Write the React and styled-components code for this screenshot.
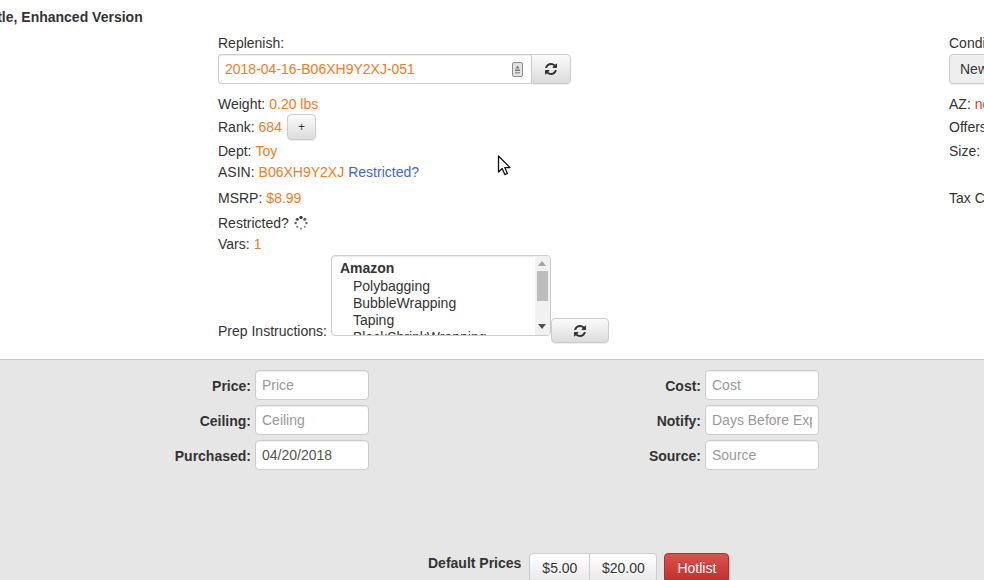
import React from "react"
import styled, { createGlobalStyle } from "styled-components"

const GlobalStyle = createGlobalStyle`
  html, body {
    margin: 0;
    padding: 0;
    background: #fff;
  }
  body {
    font-family: "Liberation Sans", Arial, sans-serif;
    font-size: 14px;
    line-height: 20px;
    color: #333;
  }
`;

const Page = styled.div`
  position: relative;
  width: 984px;
  height: 580px;
  overflow: hidden;
`;

const TopPanel = styled.div`
  height: 359px;
  box-sizing: border-box;
  padding-top: 7px;
`;

const Title = styled.div`
  font-weight: bold;
  line-height: 20px;
  white-space: nowrap;
  margin-left: -15px;
`;

const Columns = styled.div`
  display: flex;
  margin: 6px 0 0 218px;
`;

const LeftColumn = styled.div`
  width: 731px;
  flex: none;
`;

const RightColumn = styled.div`
  flex: none;
  width: 200px;
`;

const Row = styled.div`
  display: flex;
  align-items: center;
  height: ${(p) => p.$h || 20}px;
  margin-top: ${(p) => p.$mt || 0}px;
  white-space: nowrap;
`;

const Value = styled.span`
  color: #f47b20;
  margin-left: 4px;
`;

const Alert = styled.span`
  color: #d9402f;
  margin-left: 4px;
`;

const LinkText = styled.a`
  color: #3f67c8;
  margin-left: 4px;
`;

const InputGroup = styled.div`
  display: flex;
  width: 353px;
  height: 30px;
  margin-top: 1px;
`;

const ReplenishField = styled.div`
  flex: 1;
  display: flex;
  align-items: center;
  justify-content: space-between;
  box-sizing: border-box;
  padding: 0 8px 0 6px;
  background: #fff;
  border: 1px solid #ccc;
  border-right: 0;
  border-radius: 4px 0 0 4px;
  box-shadow: inset 0 1px 1px rgba(0, 0, 0, 0.075);
  color: #f47b20;
`;

const Button = styled.button`
  display: flex;
  align-items: center;
  justify-content: center;
  box-sizing: border-box;
  flex: none;
  width: ${(p) => p.$w}px;
  height: ${(p) => p.$h}px;
  margin-left: ${(p) => p.$ml || 0}px;
  margin-bottom: ${(p) => p.$mb || 0}px;
  padding: 0;
  font-family: inherit;
  font-size: ${(p) => p.$fs || 14}px;
  color: #333;
  background: linear-gradient(to bottom, #fbfbfb 0%, #dcdcdc 100%);
  border: 1px solid #ccc;
  border-radius: ${(p) => p.$radius || "4px"};
  text-shadow: 0 1px 0 #fff;
  box-shadow: inset 0 1px 0 rgba(255, 255, 255, 0.15), 0 1px 1px rgba(0, 0, 0, 0.075);
`;

const ConditionButton = styled(Button)`
  justify-content: flex-start;
  padding-left: 10px;
  margin-top: 1px;
  background: #eee;
`;

const PriceButton = styled(Button)`
  background: linear-gradient(to bottom, #fff 0%, #e8e8e8 100%);
`;

const PrepRow = styled.div`
  display: flex;
  align-items: flex-end;
  margin-top: 1px;
  white-space: nowrap;
`;

const PrepLabel = styled.span`
  margin-right: 4px;
  line-height: 20px;
  margin-bottom: -5px;
`;

const ListBox = styled.div`
  display: flex;
  box-sizing: border-box;
  width: 220px;
  height: 81px;
  background: #fff;
  border: 1px solid #ccc;
  border-radius: 4px;
  overflow: hidden;
  box-shadow: inset 0 1px 1px rgba(0, 0, 0, 0.075);
`;

const ListItems = styled.div`
  flex: 1;
  padding: 4px 0 0 8px;
  overflow: hidden;
`;

const GroupName = styled.div`
  font-weight: bold;
  line-height: 17px;
  margin-bottom: 1px;
`;

const Item = styled.div`
  line-height: 17px;
  padding-left: 13px;
`;

const ScrollTrack = styled.div`
  position: relative;
  flex: none;
  width: 15px;
  background: #f1f1f1;
`;

const ArrowUp = styled.div`
  position: absolute;
  top: 5px;
  left: 3px;
  border-left: 4px solid transparent;
  border-right: 4px solid transparent;
  border-bottom: 5px solid #a3a3a3;
`;

const ArrowDown = styled.div`
  position: absolute;
  bottom: 6px;
  left: 3px;
  border-left: 4px solid transparent;
  border-right: 4px solid transparent;
  border-top: 5px solid #505050;
`;

const Thumb = styled.div`
  position: absolute;
  top: 15px;
  left: 2px;
  width: 11px;
  height: 30px;
  background: #bdbdbd;
`;

const BottomPanel = styled.div`
  height: 221px;
  box-sizing: border-box;
  background: #e6e6e6;
  border-top: 1px solid #c8c8c8;
  padding-top: 10px;
`;

const FormGrid = styled.div`
  display: grid;
  grid-template-columns: 450px 450px;
`;

const FieldColumn = styled.div`
  display: flex;
  flex-direction: column;
  gap: 5px;
`;

const Field = styled.div`
  display: flex;
  align-items: center;
  justify-content: flex-end;
  gap: 4px;
  width: 369px;
`;

const FieldLabel = styled.label`
  font-weight: bold;
  margin-top: 2px;
`;

const TextInput = styled.input`
  box-sizing: border-box;
  width: 114px;
  height: 30px;
  padding: 0 6px;
  font-family: inherit;
  font-size: 14px;
  color: #555;
  background: #fff;
  border: 1px solid #ccc;
  border-radius: 4px;
  box-shadow: inset 0 1px 1px rgba(0, 0, 0, 0.075);
  &::placeholder {
    color: #999;
    opacity: 1;
  }
`;

const PriceBar = styled.div`
  display: flex;
  align-items: flex-start;
  margin: 83px 0 0 428px;
`;

const PriceLabel = styled.span`
  font-weight: bold;
  margin-right: 8px;
`;

const HotlistButton = styled.button`
  flex: none;
  box-sizing: border-box;
  width: 65px;
  height: 30px;
  margin-left: 7px;
  padding: 0;
  font-family: inherit;
  font-size: 14px;
  color: #fff;
  background: linear-gradient(to bottom, #d9534f 0%, #c12e2a 100%);
  border: 1px solid #b92c28;
  border-radius: 4px;
  text-shadow: 0 -1px 0 rgba(0, 0, 0, 0.2);
`;

const CursorMark = styled.svg`
  position: absolute;
  left: 497px;
  top: 155px;
`;

const SpinnerMark = styled.svg`
  margin-left: 5px;
`;

const spinnerDots = [
  [7, 1.6, 1.7, 0.95],
  [10.8, 3.2, 1.5, 0.8],
  [12.4, 7, 1.2, 0.7],
  [10.8, 10.8, 1, 0.6],
  [7, 12.4, 1, 0.6],
  [3.2, 10.8, 1.1, 0.65],
  [1.6, 7, 1.3, 0.75],
  [3.2, 3.2, 1.5, 0.85],
];

const Spinner = () => (
  <SpinnerMark width="14" height="14" viewBox="0 0 14 14">
    {spinnerDots.map(([x, y, r, o]) => (
      <circle key={x + "-" + y} cx={x} cy={y} r={r} fill="#333" opacity={o} />
    ))}
  </SpinnerMark>
);

const RefreshIcon = () => (
  <svg width="14" height="14" viewBox="0 0 1792 1792" fill="#333">
    <path d="M1639 1056q0 5-1 7-64 268-268 434.500t-478 166.500q-146 0-282.500-55t-243.500-157l-129 129q-19 19-45 19t-45-19-19-45v-448q0-26 19-45t45-19h448q26 0 45 19t19 45-19 45l-137 137q71 66 161 102t187 36q134 0 250-65t186-179q11-17 53-117 8-23 30-23h192q13 0 22.500 9.500t9.500 22.500zm25-800v448q0 26-19 45t-45 19h-448q-26 0-45-19t-19-45 19-45l138-138q-148-137-349-137-134 0-250 65t-186 179q-11 17-53 117-8 23-30 23h-199q-13 0-22.500-9.500t-9.500-22.500v-7q65-268 270-434.500t480-166.500q146 0 284 55.500t245 156.500l130-129q19-19 45-19t45 19 19 45z" />
  </svg>
);

const FieldIcon = () => (
  <svg width="11" height="15" viewBox="0 0 11 15">
    <rect x="0.5" y="0.5" width="10" height="14" rx="1.5" fill="#e2e2e2" stroke="#8c8c8c" />
    <path d="M5.5 3.5 L7.5 6.5 H3.5 Z" fill="#777" />
    <rect x="3" y="7.5" width="5" height="1.5" fill="#777" />
    <rect x="3" y="10" width="5" height="1.5" fill="#999" />
  </svg>
);

const Cursor = () => (
  <CursorMark width="15" height="22" viewBox="0 0 15 22">
    <path
      d="M1.5 1 V17 L5.2 13.6 L7.8 19.6 L10.4 18.4 L7.8 12.6 H13 Z"
      fill="#fff"
      stroke="#111"
      strokeWidth="1.3"
      strokeLinejoin="round"
    />
  </CursorMark>
);

export default function App() {
  return (
    <Page>
      <GlobalStyle />
      <TopPanel>
        <Title>Title, Enhanced Version</Title>
        <Columns>
          <LeftColumn>
            <Row>Replenish:</Row>
            <InputGroup>
              <ReplenishField>
                2018-04-16-B06XH9Y2XJ-051
                <FieldIcon />
              </ReplenishField>
              <Button $w={40} $h={30} $radius="0 4px 4px 0">
                <RefreshIcon />
              </Button>
            </InputGroup>
            <Row $mt={10}>Weight:<Value>0.20 lbs</Value></Row>
            <Row $h={26}>
              Rank:<Value>684</Value>
              <Button $w={29} $h={26} $fs={12} $ml={5}>+</Button>
            </Row>
            <Row $mt={1}>Dept:<Value>Toy</Value></Row>
            <Row $mt={1}>
              ASIN:<Value>B06XH9Y2XJ</Value><LinkText>Restricted?</LinkText>
            </Row>
            <Row $mt={6}>MSRP:<Value>$8.99</Value></Row>
            <Row $mt={5}>Restricted?<Spinner /></Row>
            <Row $mt={1}>Vars:<Value>1</Value></Row>
            <PrepRow>
              <PrepLabel>Prep Instructions:</PrepLabel>
              <ListBox>
                <ListItems>
                  <GroupName>Amazon</GroupName>
                  <Item>Polybagging</Item>
                  <Item>BubbleWrapping</Item>
                  <Item>Taping</Item>
                  <Item>BlackShrinkWrapping</Item>
                </ListItems>
                <ScrollTrack>
                  <ArrowUp />
                  <Thumb />
                  <ArrowDown />
                </ScrollTrack>
              </ListBox>
              <Button $w={58} $h={25} $mb={-7}>
                <RefreshIcon />
              </Button>
            </PrepRow>
          </LeftColumn>
          <RightColumn>
            <Row>Condition:</Row>
            <ConditionButton $w={80} $h={30}>New</ConditionButton>
            <Row $mt={10}>AZ:<Alert>no</Alert></Row>
            <Row $mt={3}>Offers:</Row>
            <Row $mt={4}>Size:</Row>
            <Row $mt={27}>Tax Code:</Row>
          </RightColumn>
        </Columns>
      </TopPanel>
      <BottomPanel>
        <FormGrid>
          <FieldColumn>
            <Field><FieldLabel>Price:</FieldLabel><TextInput placeholder="Price" /></Field>
            <Field><FieldLabel>Ceiling:</FieldLabel><TextInput placeholder="Ceiling" /></Field>
            <Field><FieldLabel>Purchased:</FieldLabel><TextInput defaultValue="04/20/2018" /></Field>
          </FieldColumn>
          <FieldColumn>
            <Field><FieldLabel>Cost:</FieldLabel><TextInput placeholder="Cost" /></Field>
            <Field><FieldLabel>Notify:</FieldLabel><TextInput placeholder="Days Before Expiry" /></Field>
            <Field><FieldLabel>Source:</FieldLabel><TextInput placeholder="Source" /></Field>
          </FieldColumn>
        </FormGrid>
        <PriceBar>
          <PriceLabel>Default Prices</PriceLabel>
          <PriceButton $w={61} $h={30} $radius="4px 0 0 4px">$5.00</PriceButton>
          <PriceButton $w={68} $h={30} $radius="0 4px 4px 0" $ml={-1}>$20.00</PriceButton>
          <HotlistButton>Hotlist</HotlistButton>
        </PriceBar>
      </BottomPanel>
      <Cursor />
    </Page>
  );
}
